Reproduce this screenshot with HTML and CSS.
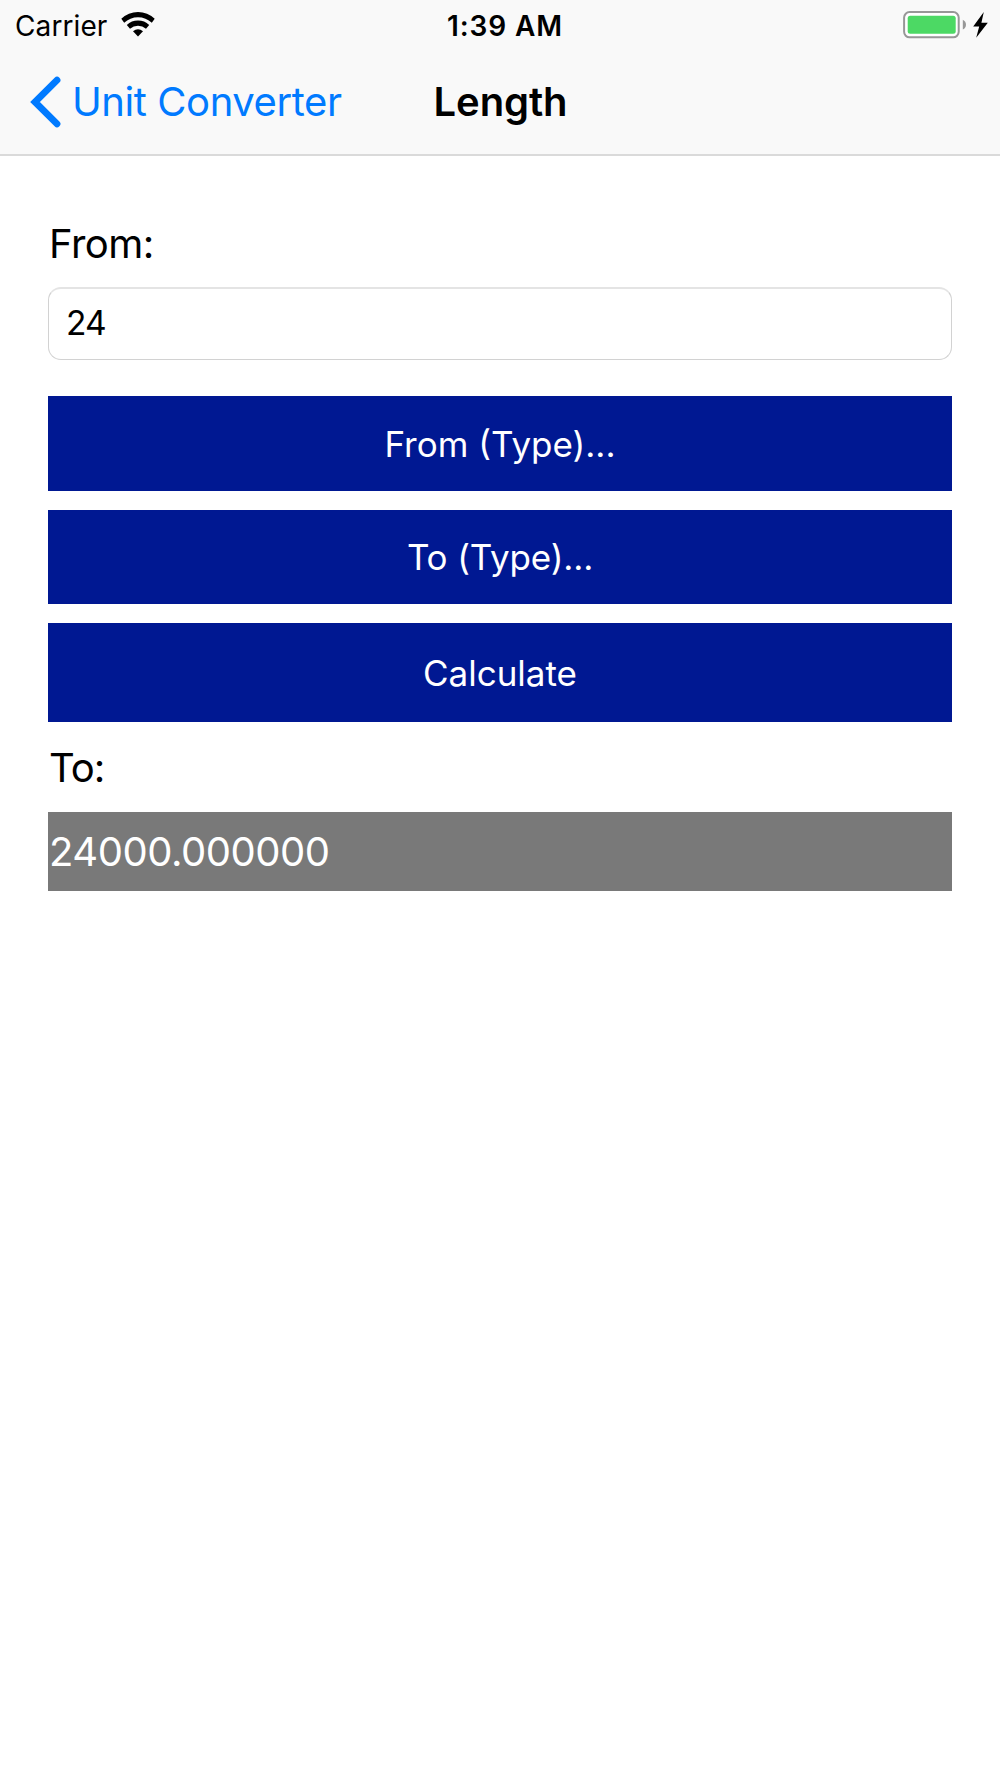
FILE: index.html
```html
<!DOCTYPE html>
<html lang="en">

<head>
    <meta charset="UTF-8">
    <meta name="viewport" content="width=device-width, initial-scale=1.0">
    <title>Length</title>
    <link rel="stylesheet" href="styles.css">
</head>

<body>
    <div class="header">
        <div class="status">
            <div class="status__left">
                <span class="carrier">Carrier</span>
                <svg class="wifi" width="34" height="25" viewBox="0 0 34 25">
                    <path d="M0.3 6.8 A24 24 0 0 1 33.7 6.8 L30.8 10.8 A20 20 0 0 0 3.2 10.8 Z" />
                    <path d="M5.8 13 A16.2 16.2 0 0 1 28.2 13 L25 16.8 A12 12 0 0 0 9 16.8 Z" />
                    <path d="M12 19.2 A8 8 0 0 1 22 19.2 L17 24.4 Z" />
                </svg>
            </div>
            <span class="time">1:39 AM</span>
            <div class="status__right">
                <svg class="battery" width="86" height="28" viewBox="0 0 86 28">
                    <rect x="1.1" y="1.1" width="54.6" height="25.2" rx="5.5" fill="#fff" stroke="#979797" stroke-width="2" />
                    <rect x="4.7" y="4.7" width="48" height="18" rx="2.5" fill="#4cd964" />
                    <path d="M59.8 8.8 Q63 10.5 63 13.7 Q63 16.9 59.8 18.6 Z" fill="#979797" />
                    <path d="M80.8 1 L70.2 15.4 H76.2 L73.2 26.8 L84.8 11.8 H78.4 Z" fill="#000" />
                </svg>
            </div>
        </div>
        <div class="nav">
            <a class="back" href="#">
                <svg class="back__arrow" width="31" height="52" viewBox="0 0 31 52">
                    <path d="M27 4.2 L5 26 L27 47.8" />
                </svg>
                <span class="back__text">Unit Converter</span>
            </a>
            <h1 class="title">Length</h1>
        </div>
    </div>
    <div class="container">
        <label class="label" for="from">From:</label>
        <input class="inputFrom" id="from" type="text" value="24">
        <button class="btn">From (Type)...</button>
        <button class="btn btnTo">To (Type)...</button>
        <button class="btn calculate">Calculate</button>
        <p class="label labelTo">To:</p>
        <p class="result">24000.000000</p>
    </div>
</body>

</html>
```
FILE: styles.css
```css
* {
    margin: 0;
    padding: 0;
    box-sizing: border-box;
}

body {
    background-color: #fff;
    color: #000;
    font-family: Inter, "Liberation Sans", sans-serif;
}

.header {
    height: 156px;
    background-color: #f9f9f9;
    border-bottom: 2px solid #dadada;
}

.status {
    display: grid;
    grid-template-columns: 1fr auto 1fr;
    align-items: center;
    height: 51px;
    padding: 0 11px 0 15px;
    font-size: 28px;
}

.status__left {
    display: flex;
    align-items: center;
    gap: 14px;
}

.carrier {
    letter-spacing: 0.1px;
}

.wifi {
    margin-bottom: 3px;
}

.time {
    padding-left: 6px;
    font-weight: 600;
    letter-spacing: 0.9px;
}

.status__right {
    display: flex;
    justify-content: flex-end;
    margin-bottom: 2px;
}

.nav {
    display: grid;
    grid-template-columns: 1fr auto 1fr;
    align-items: center;
    height: 101px;
    padding: 0 30px;
    font-size: 40px;
}

.back {
    display: flex;
    align-items: center;
    gap: 11px;
    color: #007aff;
    text-decoration: none;
    white-space: nowrap;
}

.back__text {
    letter-spacing: -0.42px;
}

.back__arrow {
    fill: none;
    stroke: #007aff;
    stroke-width: 6.8;
    stroke-linecap: round;
    stroke-linejoin: miter;
}

.title {
    padding-left: 1px;
    font-size: 40px;
    font-weight: 600;
    letter-spacing: -0.1px;
}

.container {
    display: flex;
    flex-direction: column;
    padding: 61px 48px 0;
}

.label {
    height: 53px;
    line-height: 53px;
    padding-left: 1px;
    font-size: 40px;
    letter-spacing: -0.5px;
}

.labelTo {
    letter-spacing: -1px;
}

.inputFrom {
    height: 73px;
    margin: 17px 0 36px;
    padding: 0 17px 3px;
    border: 1px solid #d2d2d2;
    border-top: 2px solid #e4e4e4;
    border-radius: 13px;
    background-color: #fff;
    color: #000;
    font-family: inherit;
    font-size: 33.5px;
    letter-spacing: -0.8px;
    outline: none;
}

.btn {
    height: 94.5px;
    margin-bottom: 19px;
    padding-top: 1px;
    border: none;
    background-color: #001892;
    color: #fff;
    font-family: inherit;
    font-size: 35px;
}

.btnTo {
    letter-spacing: -0.15px;
}

.calculate {
    height: 99px;
}

.result {
    height: 79.5px;
    line-height: 80.5px;
    margin-top: 17.5px;
    padding-left: 1px;
    background-color: #797979;
    color: #fff;
    font-size: 40px;
    letter-spacing: -0.48px;
}
```
